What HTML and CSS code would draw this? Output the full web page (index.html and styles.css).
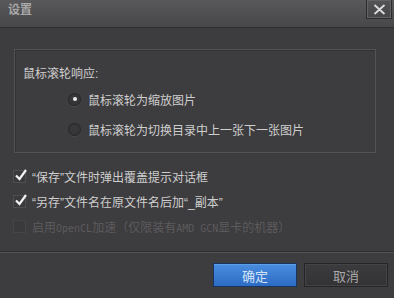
FILE: index.html
```html
<!DOCTYPE html>
<html lang="zh-CN">
<head>
<meta charset="utf-8">
<title>设置</title>
<link rel="stylesheet" href="styles.css">
</head>
<body>
<div class="dialog">
  <div class="titlebar">
    <span class="title">设置</span>
    <button class="close" aria-label="关闭">
      <svg width="13" height="11" viewBox="0 0 13 11"><path d="M1.5 1 L11.5 10 M11.5 1 L1.5 10" stroke="#dcdcdc" stroke-width="1.8" fill="none"/></svg>
    </button>
  </div>
  <div class="content">
    <div class="group">
      <div class="group-label">鼠标滚轮响应:</div>
      <div class="radio-row">
        <span class="radio checked"></span>
        <span class="text">鼠标滚轮为缩放图片</span>
      </div>
      <div class="radio-row">
        <span class="radio"></span>
        <span class="text">鼠标滚轮为切换目录中上一张下一张图片</span>
      </div>
    </div>
    <div class="checks">
      <div class="check-row">
        <span class="checkbox checked">
          <svg width="14" height="14" viewBox="0 0 14 14"><path d="M2 7.5 L5.5 11 L12 2" stroke="#f2f2f2" stroke-width="2.2" fill="none"/></svg>
        </span>
        <span class="text">“保存”文件时弹出覆盖提示对话框</span>
      </div>
      <div class="check-row">
        <span class="checkbox checked">
          <svg width="14" height="14" viewBox="0 0 14 14"><path d="M2 7.5 L5.5 11 L12 2" stroke="#f2f2f2" stroke-width="2.2" fill="none"/></svg>
        </span>
        <span class="text">“另存”文件名在原文件名后加“_副本”</span>
      </div>
      <div class="check-row disabled">
        <span class="checkbox"></span>
        <span class="text">启用<span class="mono">OpenCL</span>加速（仅限装有<span class="mono">AMD GCN</span>显卡的机器）</span>
      </div>
    </div>
  </div>
  <div class="separator"></div>
  <div class="buttons">
    <button class="btn primary">确定</button>
    <button class="btn">取消</button>
  </div>
</div>
</body>
</html>
```

FILE: styles.css
```css
html, body {
  margin: 0;
  padding: 0;
  background: #3d3c3e;
}
body {
  width: 394px;
  height: 298px;
  overflow: hidden;
  font-family: "Liberation Sans", "Noto Sans CJK SC", sans-serif;
  font-size: 12px;
  color: #cfcfcf;
}
.dialog {
  display: flex;
  flex-direction: column;
  height: 298px;
}
.titlebar {
  height: 27px;
  flex: none;
  display: flex;
  align-items: flex-start;
  justify-content: space-between;
  background: linear-gradient(#59595b, #474648);
  border-bottom: 1px solid #2f2e30;
}
.title {
  margin: 2px 0 0 8px;
  color: #a9a9a9;
  font-size: 12px;
  line-height: 16px;
  font-weight: bold;
}
.close {
  margin: 0 2px 0 0;
  width: 26px;
  height: 19px;
  padding: 0;
  border: 1px solid #2c2c2e;
  border-top: none;
  background: linear-gradient(#545456, #464648);
  box-shadow: inset 0 0 0 1px #636365;
  display: flex;
  align-items: center;
  justify-content: center;
}
.content {
  flex: none;
  padding: 21px 18px 0 14px;
}
.group {
  border: 1px solid #525153;
  box-shadow: inset 1px 1px 0 #333234;
  padding: 16px 0 0 8px;
  height: 86px;
}
.group-label {
  line-height: 16px;
}
.radio-row {
  display: flex;
  align-items: center;
  height: 30px;
  padding-left: 45px;
}
.group-label + .radio-row {
  margin-top: 2px;
}
.radio {
  width: 13px;
  height: 13px;
  border-radius: 50%;
  background: radial-gradient(circle at 50% 40%, #3a393b, #302f31);
  box-shadow: inset 0 0 0 1px #2a292b, 0 1px 0 #4c4b4d;
  margin-right: 7px;
  display: flex;
  align-items: center;
  justify-content: center;
  flex: none;
}
.radio.checked::after {
  content: "";
  width: 4px;
  height: 4px;
  border-radius: 50%;
  background: #ececec;
}
.checks {
  margin-top: 11px;
}
.check-row {
  display: flex;
  align-items: center;
  height: 25px;
  margin-left: -1px;
}
.checkbox {
  width: 13px;
  height: 13px;
  flex: none;
  border: 1px solid #4f4e50;
  background: #3a393b;
  box-sizing: border-box;
  margin-right: 6px;
  position: relative;
}
.checkbox svg {
  position: absolute;
  left: 0;
  top: -3px;
}
.disabled .checkbox {
  border-color: #454446;
}
.disabled .text {
  color: #5c5b5d;
}
.mono {
  font-family: "DejaVu Sans Mono", monospace;
  font-size: 10px;
}
.separator {
  margin-top: 12px;
  height: 1px;
  border-top: 1px solid #2f2e30;
  background: #525153;
}
.buttons {
  display: flex;
  justify-content: flex-end;
  gap: 7px;
  padding: 10px 6px 0 0;
}
.btn {
  width: 84px;
  height: 24px;
  font-family: "Liberation Sans", "Noto Sans CJK SC", sans-serif;
  font-size: 13px;
  color: #a8a8a8;
  background: linear-gradient(#3b3a3c, #333234);
  border: 1px solid #252426;
  box-shadow: inset 0 0 0 1px #444345;
  padding: 0;
}
.btn.primary {
  color: #d4e4f7;
  background: linear-gradient(#4a8ee0, #2d6bc4);
  border: 1px solid #18355f;
  box-shadow: inset 0 1px 0 #5d9ce6;
}
```
